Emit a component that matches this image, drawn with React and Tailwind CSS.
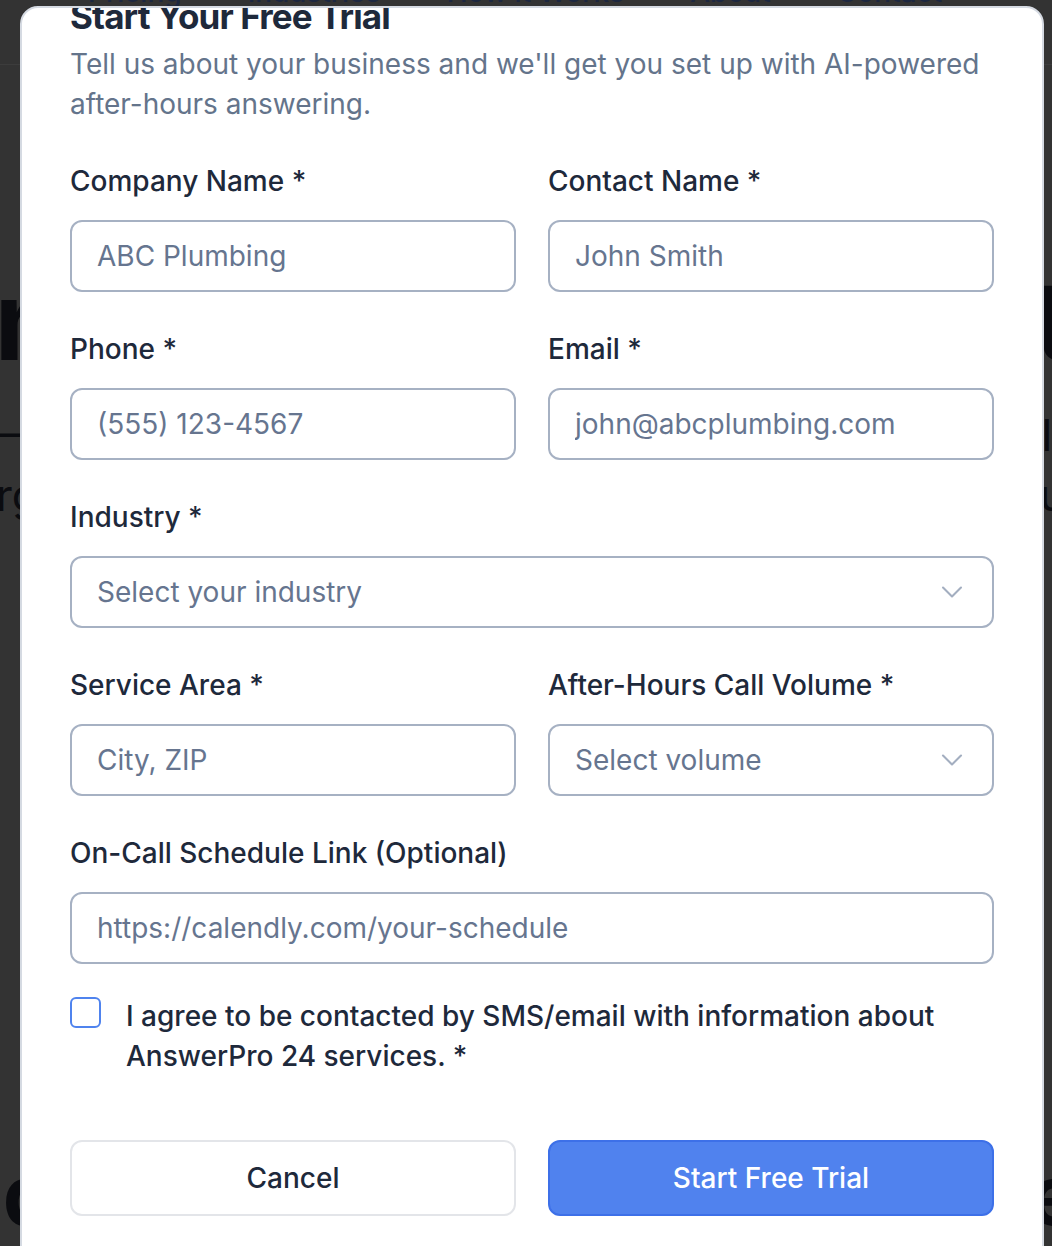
import React from 'react';
import { ChevronDown } from 'lucide-react';

const navLinks = ['Pricing', 'Industries', 'How it Works', 'About', 'Contact'];

const Label = ({ children }) => (
    <label className="block text-[28px] leading-[40px] font-medium text-[#1e293b] mb-[19px]">{children}</label>
);

const TextField = ({ label, placeholder }) => (
    <div>
        <Label>{label}</Label>
        <input
            type="text"
            placeholder={placeholder}
            className="w-full h-[72px] rounded-[12px] border-2 border-[#a6b1c3] bg-white pl-[25px] pr-4 text-[28px] text-[#1e293b] placeholder:text-[#66758f] outline-none"
        />
    </div>
);

const SelectField = ({ label, placeholder }) => (
    <div>
        <Label>{label}</Label>
        <button
            type="button"
            className="w-full h-[72px] rounded-[12px] border-2 border-[#a6b1c3] bg-white pl-[25px] pr-[22px] flex items-center justify-between text-[28px] text-[#66758f]"
        >
            <span>{placeholder}</span>
            <ChevronDown size={36} strokeWidth={1.4} className="text-[#a3aec0]" />
        </button>
    </div>
);

export default function App() {
    return (
        <div className="relative h-[1246px] overflow-hidden bg-[#333333] font-['Inter','Noto_Sans',sans-serif]">
            {/* page behind the dialog */}
            <header className="h-[65px] border-b border-[#3c3c3c] overflow-hidden">
                <nav className="flex gap-[66px] pl-[88px] -mt-[22px] text-[28px] leading-[28px] font-medium text-[#1c2740]">
                    {navLinks.map(link => (
                        <span key={link}>{link}</span>
                    ))}
                </nav>
            </header>
            <section className="flex flex-col items-center text-[#0b0c10] whitespace-nowrap">
                <h1 className="mt-[190px] text-[110px] leading-[130px] font-bold">0 Answering 24/7 Solution</h1>
                <p className="mt-[20px] text-[44px] leading-[60px]">— Never miss a call after hours, we handle your calls</p>
                <p className="text-[44px] leading-[60px]">urgent jobs booked while you rest, no matter the hour</p>
                <p className="mt-[620px] text-[84px] leading-[100px] font-bold">nc Industries Trust Us Each Week c</p>
            </section>

            {/* dialog */}
            <div className="absolute inset-x-0 top-[6px] bottom-0 flex">
                <div className="ml-[20px] w-[1024px] h-[1270px] rounded-t-[18px] border-2 border-[#d5dae2] bg-white overflow-hidden">
                    <div className="px-[48px] -mt-[12px]">
                        <h2 className="text-[35px] leading-[40px] font-bold tracking-tight text-[#1e293b]">Start Your Free Trial</h2>
                        <p className="mt-[8px] text-[28px] leading-[40px] text-[#64748b]">
                            Tell us about your business and we'll get you set up with AI-powered after-hours answering.
                        </p>

                        <form className="mt-[37px] flex flex-col gap-[37px]" onSubmit={e => e.preventDefault()}>
                            <div className="grid grid-cols-2 gap-x-[32px] gap-y-[37px]">
                                <TextField label="Company Name *" placeholder="ABC Plumbing" />
                                <TextField label="Contact Name *" placeholder="John Smith" />
                                <TextField label="Phone *" placeholder="(555) 123-4567" />
                                <TextField label="Email *" placeholder="john@abcplumbing.com" />
                                <div className="col-span-2">
                                    <SelectField label="Industry *" placeholder="Select your industry" />
                                </div>
                                <TextField label="Service Area *" placeholder="City, ZIP" />
                                <SelectField label="After-Hours Call Volume *" placeholder="Select volume" />
                                <div className="col-span-2">
                                    <TextField label="On-Call Schedule Link (Optional)" placeholder="https://calendly.com/your-schedule" />
                                </div>
                            </div>

                            <label className="flex items-start gap-[25px] -mt-[5px]">
                                <span className="mt-[1px] w-[31px] h-[31px] shrink-0 rounded-[6px] border-2 border-[#4f83ee] bg-white" />
                                <span className="text-[28px] leading-[40px] font-medium text-[#1e293b]">
                                    I agree to be contacted by SMS/email with information about AnswerPro 24 services. *
                                </span>
                            </label>

                            <div className="grid grid-cols-2 gap-x-[32px] mt-[27px]">
                                <button
                                    type="button"
                                    className="h-[76px] rounded-[12px] border-2 border-[#e3e5e9] bg-white text-[28px] font-medium text-[#1e293b]"
                                >
                                    Cancel
                                </button>
                                <button
                                    type="submit"
                                    className="h-[76px] rounded-[12px] border-2 border-[#3d70e8] bg-[#5082ee] text-[28px] font-medium text-white"
                                >
                                    Start Free Trial
                                </button>
                            </div>
                        </form>
                    </div>
                </div>
            </div>
        </div>
    );
}
